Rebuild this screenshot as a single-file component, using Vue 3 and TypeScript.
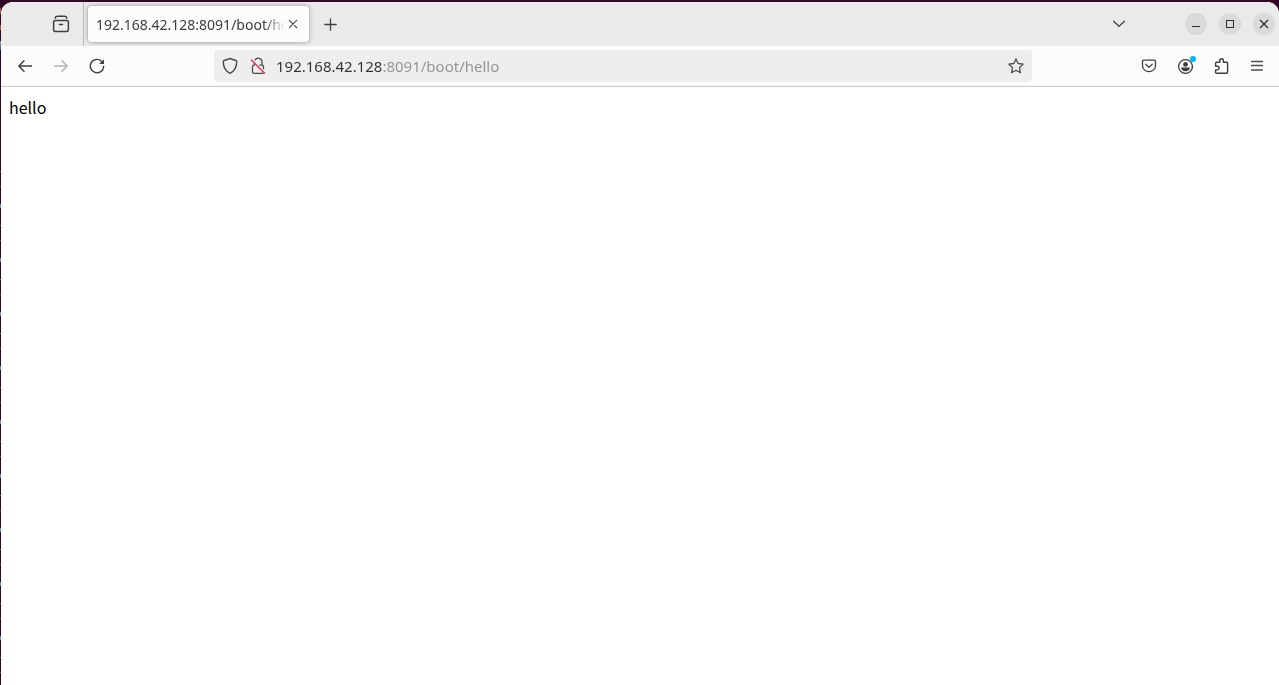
<script setup lang="ts">
import { ref } from 'vue'

const address = ref('192.168.42.128:8091/boot/hello')
const tabTitle = '192.168.42.128:8091/boot/hello'
</script>

<template>
  <div class="desktop">
    <div class="window">
      <header class="tabbar">
        <button class="icon-button recent" type="button" aria-label="Recent browsing">
          <svg width="18" height="18" viewBox="0 0 18 18" fill="none" stroke="#3f3f3f" stroke-width="1.5" stroke-linecap="round" stroke-linejoin="round">
            <path d="M3.2 3.2Q3.6 1.3 5.5 1.3H12.5Q14.4 1.3 14.8 3.2" />
            <rect x="1.6" y="5.4" width="14.8" height="11" rx="1.8" />
            <path d="M7.5 9.5H10.5" />
          </svg>
        </button>
        <div class="tab">
          <span class="tab-title">{{ tabTitle }}</span>
          <button class="tab-close" type="button" aria-label="Close tab">
            <svg width="10" height="10" viewBox="0 0 10 10" fill="none" stroke="#4a4a4a" stroke-width="1.1" stroke-linecap="round">
              <path d="M1.3 1.3L8.7 8.7M8.7 1.3L1.3 8.7" />
            </svg>
          </button>
        </div>
        <button class="icon-button new-tab" type="button" aria-label="New tab">
          <svg width="14" height="14" viewBox="0 0 14 14" fill="none" stroke="#3f3f3f" stroke-width="1.3" stroke-linecap="round">
            <path d="M7.5 1.8V13.2M1.8 7.5H13.2" />
          </svg>
        </button>
        <button class="icon-button list-tabs" type="button" aria-label="List all tabs">
          <svg width="14" height="14" viewBox="0 0 14 14" fill="none" stroke="#3f3f3f" stroke-width="1.3" stroke-linecap="round" stroke-linejoin="round">
            <path d="M1.6 4.2L7 9.4L12.4 4.2" />
          </svg>
        </button>
        <div class="window-controls">
          <button type="button" aria-label="Minimize">
            <svg width="10" height="10" viewBox="0 0 10 10" stroke="#2e2e2e"><path d="M1 7.5H9" /></svg>
          </button>
          <button type="button" aria-label="Maximize">
            <svg width="10" height="10" viewBox="0 0 10 10" fill="none" stroke="#2e2e2e"><rect x="1.5" y="1.5" width="7" height="7" /></svg>
          </button>
          <button type="button" aria-label="Close window">
            <svg width="10" height="10" viewBox="0 0 10 10" stroke="#2e2e2e" stroke-width="1.3"><path d="M1 1L9 9M9 1L1 9" /></svg>
          </button>
        </div>
      </header>

      <nav class="toolbar" aria-label="Navigation">
        <button class="icon-button" type="button" aria-label="Back">
          <svg width="16" height="16" viewBox="0 0 16 16" fill="none" stroke="#3f3f3f" stroke-width="1.5" stroke-linecap="round" stroke-linejoin="round">
            <path d="M14.5 8H1.8M7 2.8L1.8 8L7 13.2" />
          </svg>
        </button>
        <button class="icon-button" type="button" aria-label="Forward" disabled>
          <svg width="16" height="16" viewBox="0 0 16 16" fill="none" stroke="#b2b2b2" stroke-width="1.5" stroke-linecap="round" stroke-linejoin="round">
            <path d="M1.5 8H14.2M9 2.8L14.2 8L9 13.2" />
          </svg>
        </button>
        <button class="icon-button" type="button" aria-label="Reload">
          <svg width="16" height="16" viewBox="0 0 16 16" fill="none" stroke="#3f3f3f" stroke-width="1.4" stroke-linecap="round">
            <path d="M13.3 4A6.7 6.7 0 1 0 14.7 8.3" />
            <path d="M15 1.2V5.4Q15 6 14.4 6H10.2Z" fill="#3f3f3f" stroke="none" />
          </svg>
        </button>
        <div class="spring"></div>
        <form class="urlbar" @submit.prevent>
          <button class="field-button" type="button" aria-label="Tracking protection">
            <svg width="16" height="18" viewBox="0 0 16 18" fill="none" stroke="#4b4b4b" stroke-width="1.4" stroke-linejoin="round">
              <path d="M8 1.5L13.8 3.5Q14.7 3.8 14.7 4.8C14.7 10.2 12.3 14.3 8 16.4C3.7 14.3 1.3 10.2 1.3 4.8Q1.3 3.8 2.2 3.5Z" />
            </svg>
          </button>
          <button class="field-button" type="button" aria-label="Connection is not secure">
            <svg width="16" height="18" viewBox="0 0 16 18" fill="none" stroke="#4b4b4b" stroke-width="1.3" stroke-linecap="round" stroke-linejoin="round">
              <path d="M5 2.9A3.8 3.8 0 0 1 12 5.2V8.2M9.8 8.2H12Q13.5 8.2 13.5 9.7V11.7M4.3 6V8.2M4.3 8.2Q2.5 8.2 2.5 9.8V14.8Q2.5 16.4 4 16.4H12Q12.8 16.4 13.2 16" />
              <path d="M1.4 3L14.6 16.2" stroke="#e22850" />
            </svg>
          </button>
          <input v-model="address" class="address" type="text" aria-label="Address" spellcheck="false" />
          <button class="field-button" type="button" aria-label="Bookmark this page">
            <svg width="16" height="16" viewBox="0 0 16 16" fill="none" stroke="#4b4b4b" stroke-width="1.3" stroke-linejoin="round">
              <path d="M8 1L10.1 5.5L15.2 6.1L11.5 9.6L12.4 14.8L8 12.3L3.6 14.8L4.5 9.6L0.8 6.1L5.9 5.5Z" />
            </svg>
          </button>
        </form>
        <div class="spring"></div>
        <button class="icon-button" type="button" aria-label="Save to Pocket">
          <svg width="16" height="16" viewBox="0 0 16 16" fill="none" stroke="#3f3f3f" stroke-width="1.3" stroke-linecap="round" stroke-linejoin="round">
            <path d="M2.7 2.2H13.3Q14.5 2.2 14.5 3.4V7.4A6.5 6.3 0 0 1 1.5 7.4V3.4Q1.5 2.2 2.7 2.2Z" />
            <path d="M4.8 6.3L8 9.4L11.2 6.3" />
          </svg>
        </button>
        <button class="icon-button account" type="button" aria-label="Account">
          <svg width="16" height="16" viewBox="0 0 16 16" fill="none">
            <circle cx="8.5" cy="8.5" r="6.9" stroke="#3f3f3f" stroke-width="1.3" />
            <circle cx="8.5" cy="6.4" r="2.4" fill="#3f3f3f" />
            <path d="M4 9.6H13Q12.5 13.2 8.5 13.2Q4.5 13.2 4 9.6Z" fill="#3f3f3f" />
          </svg>
          <span class="dot"></span>
        </button>
        <button class="icon-button" type="button" aria-label="Extensions">
          <svg width="16" height="18" viewBox="0 0 16 18" fill="none" stroke="#3f3f3f" stroke-width="1.4" stroke-linejoin="round">
            <path d="M6.8 5.3V3.5A1.8 1.8 0 0 1 10.4 3.5V5.3H13.6Q14.6 5.3 14.6 6.3V15.3Q14.6 16.3 13.6 16.3H3.6Q2.6 16.3 2.6 15.3V12.9H4.3A1.8 1.8 0 0 0 4.3 9.3H2.6V6.3Q2.6 5.3 3.6 5.3Z" />
          </svg>
        </button>
        <button class="icon-button" type="button" aria-label="Application menu">
          <svg width="16" height="16" viewBox="0 0 16 16" fill="none" stroke="#4b4b4b" stroke-width="1.3" stroke-linecap="round">
            <path d="M2.5 3.5H13.5M2.5 7.5H13.5M2.5 12H13.5" />
          </svg>
        </button>
      </nav>

      <main class="page">hello</main>
    </div>
  </div>
</template>

<style>
html,
body {
  margin: 0;
  background: #fff;
}
</style>

<style scoped>
.desktop {
  box-sizing: border-box;
  display: flex;
  min-height: 100vh;
  padding: 2px 0 0 1px;
  background:
    linear-gradient(to bottom, #300a24 0 8px, #a4583a 8px 14px, #300a24 14px 25px, #a4583a 25px 30px, #300a24 30px 41px, #7c8c88 41px 46px, #476a94 46px 50px, #300a24 50px) 0 0 / 1px 168px no-repeat,
    linear-gradient(#300a24, #300a24) 0 0 / 100% 168px no-repeat,
    linear-gradient(to bottom, #300a24 0 3px, #786972 3px 4px, #300a24 4px 18px, #735b65 18px 19px, #300a24 19px 36px, #698aa4 36px 40px, #300a24 40px 54px) 0 168px / 1px 54px repeat-y,
    #300a24;
  font-family: "Noto Sans", sans-serif;
  font-size: 15px;
}

.window {
  flex: 1;
  min-width: 0;
  display: flex;
  flex-direction: column;
  overflow: hidden;
  border-radius: 12px 12px 0 0;
  background: #fff;
}

button {
  display: flex;
  align-items: center;
  justify-content: center;
  flex: none;
  padding: 0;
  border: 0;
  background: transparent;
}

svg {
  display: block;
}

.icon-button {
  width: 36px;
  height: 32px;
}

.tabbar {
  display: flex;
  align-items: center;
  height: 44px;
  padding-right: 4px;
  background: #eaeaea;
}

.recent {
  box-sizing: border-box;
  width: 83px;
  height: 44px;
  padding-left: 37px;
  border-right: 1px solid #bcbcbc;
}

.tab {
  box-sizing: border-box;
  display: flex;
  align-items: center;
  flex: 0 1 221px;
  min-width: 0;
  height: 36px;
  margin-left: 4px;
  padding: 0 8px;
  border-radius: 4px;
  background: #fcfcfc;
  box-shadow: 0 0 4px rgba(0, 0, 0, 0.4);
  color: #3d3d3d;
  font-size: 14px;
}

.tab-title {
  flex: 1;
  min-width: 0;
  overflow: hidden;
  white-space: nowrap;
  mask-image: linear-gradient(to left, transparent, #000 20px);
}

.tab-close {
  width: 16px;
  height: 24px;
}

.new-tab {
  margin-left: 3px;
}

.list-tabs {
  margin-left: auto;
}

.window-controls {
  display: flex;
  gap: 12px;
  margin-left: 48px;
}

.window-controls button {
  width: 22px;
  height: 22px;
  border-radius: 50%;
  background: #dadada;
}

.toolbar {
  display: flex;
  align-items: center;
  height: 40px;
  padding: 0 4px 0 6px;
  border-bottom: 1px solid #c8c8c8;
  background: #fcfcfc;
}

.spring {
  flex: 0 1 99px;
}

.urlbar {
  box-sizing: border-box;
  display: flex;
  align-items: center;
  flex: 1;
  min-width: 0;
  height: 32px;
  padding: 0 2px;
  border-radius: 4px;
  background: #eeeeee;
}

.field-button {
  width: 28px;
  height: 28px;
}

.address {
  flex: 1;
  min-width: 0;
  height: 28px;
  padding: 0 0 0 4px;
  border: 0;
  outline: 0;
  background: linear-gradient(to right, #333 110px, #929292 110px);
  background-clip: text;
  color: transparent;
  font: inherit;
}

.account {
  position: relative;
}

.dot {
  position: absolute;
  top: 6px;
  right: 7px;
  width: 6px;
  height: 6px;
  border-radius: 50%;
  background: #00b3f4;
}

.page {
  padding: 8px;
  color: #000;
  font: 16px/24px "Noto Sans CJK SC", sans-serif;
}
</style>
